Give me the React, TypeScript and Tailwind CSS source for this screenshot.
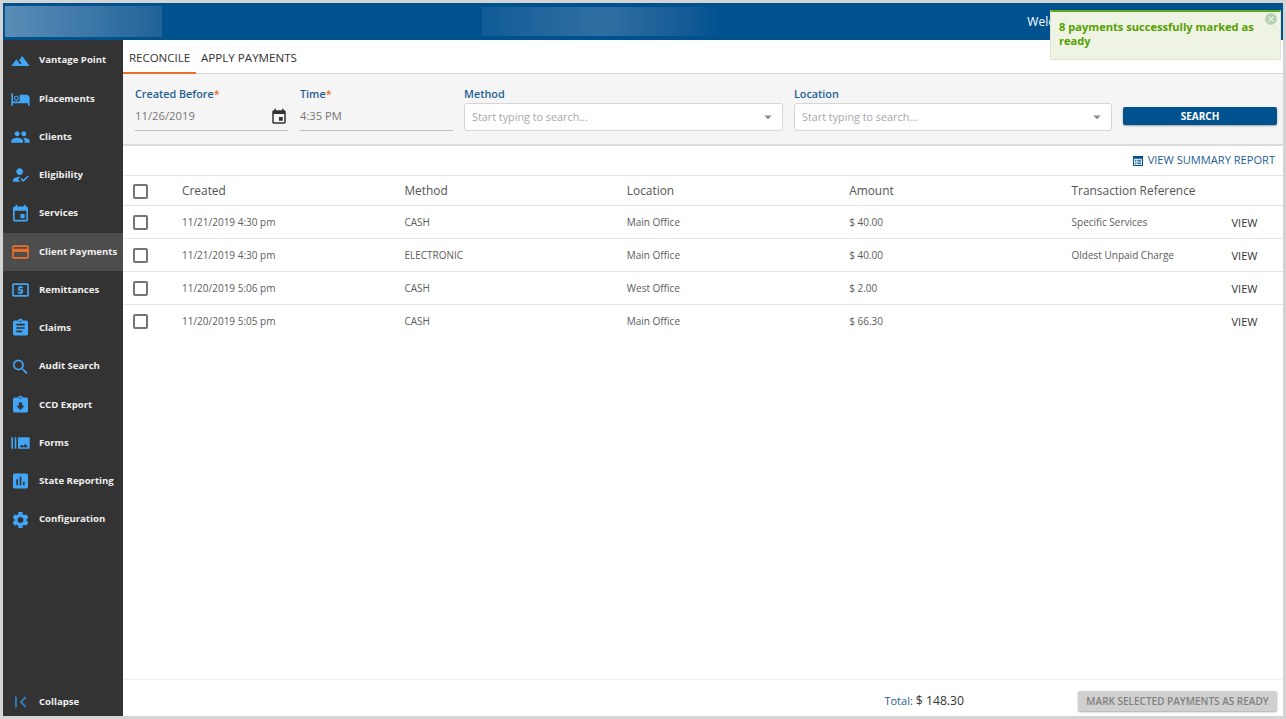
import React from "react";
import {
  MdLandscape, MdPeople, MdHowToReg, MdEvent, MdOutlineCreditCard, MdLocalAtm,
  MdAssignment, MdSearch, MdAssignmentReturned, MdBurstMode, MdAssessment, MdSettings, MdFirstPage,
  MdArrowDropDown, MdCancel,
} from "react-icons/md";

function BedIcon({ className }: { className?: string }) {
  return (
    <svg viewBox="0 0 24 24" className={className} width="1em" height="1em" fill="currentColor">
      <path
        fillRule="evenodd"
        d="M7 14c1.66 0 3-1.34 3-3S8.66 8 7 8s-3 1.34-3 3 1.34 3 3 3zm0-1.4c-.88 0-1.6-.72-1.6-1.6S6.12 9.4 7 9.4s1.6.72 1.6 1.6-.72 1.6-1.6 1.6zM19 7h-8v8H3V5H1v15h2v-3h18v3h2v-9c0-2.21-1.79-4-4-4z"
      />
    </svg>
  );
}

function SummaryIcon({ className }: { className?: string }) {
  return (
    <svg viewBox="0 0 12 12" className={className} width="1em" height="1em" fill="currentColor">
      <path fillRule="evenodd" d="M0 0h12v12H0zM1.2 3.4v7.4h9.6V3.4z" />
      <path d="M2.2 4.6h2v1.2h-2zM5.2 4.6h4.6v1.2H5.2zM2.2 6.6h2v1.2h-2zM5.2 6.6h4.6v1.2H5.2zM2.2 8.6h2v1.2h-2zM5.2 8.6h4.6v1.2H5.2z" />
    </svg>
  );
}

const nav = [
  { label: "Vantage Point", Icon: MdLandscape },
  { label: "Placements", Icon: BedIcon },
  { label: "Clients", Icon: MdPeople },
  { label: "Eligibility", Icon: MdHowToReg },
  { label: "Services", Icon: MdEvent },
  { label: "Client Payments", Icon: MdOutlineCreditCard, active: true },
  { label: "Remittances", Icon: MdLocalAtm },
  { label: "Claims", Icon: MdAssignment },
  { label: "Audit Search", Icon: MdSearch },
  { label: "CCD Export", Icon: MdAssignmentReturned },
  { label: "Forms", Icon: MdBurstMode },
  { label: "State Reporting", Icon: MdAssessment },
  { label: "Configuration", Icon: MdSettings },
];

const rows = [
  ["11/21/2019 4:30 pm", "CASH", "Main Office", "$ 40.00", "Specific Services"],
  ["11/21/2019 4:30 pm", "ELECTRONIC", "Main Office", "$ 40.00", "Oldest Unpaid Charge"],
  ["11/20/2019 5:06 pm", "CASH", "West Office", "$ 2.00", ""],
  ["11/20/2019 5:05 pm", "CASH", "Main Office", "$ 66.30", ""],
];

function Check() {
  return <span className="block w-[15px] h-[15px] rounded-[2px] border-2 border-[#757575] bg-white" />;
}

function Select({ label, width }: { label: string; width: string }) {
  return (
    <div className={`${width} flex flex-col`}>
      <label className="text-[10.8px] leading-[14px] text-[#1f6094] font-semibold h-[17px] pt-[1px]">{label}</label>
      <div className="h-[28px] bg-white border border-[#d6d6d6] rounded-[3px] flex items-center justify-between pl-[7px] pr-[5px]">
        <span className="text-[10.8px] text-[#a8a8a8]">Start typing to search...</span>
        <MdArrowDropDown className="text-[#8a8a8a] text-[18px]" />
      </div>
    </div>
  );
}

export default function App() {
  return (
    <div
      className="relative w-[1286px] h-[719px] bg-[#d4d4d4] p-[3px] overflow-hidden flex flex-col"
      style={{ fontFamily: '"Open Sans", sans-serif' }}
    >
      <header className="h-[37px] shrink-0 bg-[#00528f] flex items-center justify-between pl-[2px]">
        <div className="flex items-center">
          <div className="w-[157px] h-[31px] bg-gradient-to-r from-[#5a8eb8] to-[#1f6399]" />
          <div className="ml-[320px] w-[240px] h-[29px] bg-gradient-to-r from-[#0f5c96] via-[#2f6fa3] to-[#00528f]" />
        </div>
        <span className="text-[12px] text-white mr-[204px] pt-[1px]">Welcome</span>
      </header>

      <div className="flex flex-1 min-h-0">
        <aside className="w-[120px] shrink-0 bg-[#333333] flex flex-col pt-[1.5px]">
          <nav className="flex flex-col flex-1">
            {nav.map(({ label, Icon, active }) => (
              <div
                key={label}
                className={`h-[38.25px] flex items-center pl-[7px] ${active ? "bg-[#4d4d4d]" : ""}`}
              >
                <span className="w-[29px] flex justify-center shrink-0 -translate-x-[4.5px]">
                  <Icon className={`text-[20px] ${active ? "text-[#e8702a]" : "text-[#42a5f5]"}`} />
                </span>
                <span className="text-[9.6px] font-bold text-[#f0f0f0] whitespace-nowrap">{label}</span>
              </div>
            ))}
          </nav>
          <div className="h-[28px] flex items-center pl-[7px]">
            <span className="w-[29px] flex justify-center shrink-0 -translate-x-[4.5px]">
              <MdFirstPage className="text-[22px] text-[#2f80c0]" />
            </span>
            <span className="text-[9.6px] font-bold text-[#f0f0f0]">Collapse</span>
          </div>
        </aside>

        <main className="flex-1 bg-white flex flex-col min-w-0">
          <div className="h-[34px] shrink-0 border-b border-[#d8d8d8] flex">
            <div className="w-[73px] h-[34px] border-b-[2px] border-[#e8702a] flex justify-center pt-[10px] text-[11.5px] leading-[15px] text-[#333]">RECONCILE</div>
            <div className="ml-[5px] pt-[10px] text-[11.6px] leading-[15px] text-[#333]">APPLY PAYMENTS</div>
          </div>

          <div className="h-[72px] shrink-0 bg-[#f5f5f5] border-b-2 border-[#dcdcdc] flex items-start pt-[12px] pl-[12px] pr-[6px]">
            <div className="w-[153px]">
              <label className="block text-[10.8px] leading-[14px] h-[17px] pt-[1px] text-[#1f6094] font-semibold">Created Before<span className="text-[#e8702a]">*</span></label>
              <div className="h-[28px] border-b border-[#bdbdbd] flex items-center justify-between">
                <span className="text-[11.3px] text-[#757575]">11/26/2019</span>
                <MdEvent className="text-[18px] text-[#333]" />
              </div>
            </div>
            <div className="ml-[12px] w-[153px]">
              <label className="block text-[10.8px] leading-[14px] h-[17px] pt-[1px] text-[#1f6094] font-semibold">Time<span className="text-[#e8702a]">*</span></label>
              <div className="h-[28px] border-b border-[#bdbdbd] flex items-center">
                <span className="text-[11.2px] text-[#757575]">4:35 PM</span>
              </div>
            </div>
            <div className="ml-[11px]"><Select label="Method" width="w-[319px]" /></div>
            <div className="ml-[11px]"><Select label="Location" width="w-[318px]" /></div>
            <button className="ml-[11px] mt-[21px] w-[154px] h-[18px] bg-[#00528f] rounded-[2px] text-white text-[10px] font-bold shadow-[0_1px_2px_rgba(0,0,0,0.35)]">SEARCH</button>
          </div>

          <div className="h-[30px] shrink-0 border-b border-[#e4e4e4] flex items-center justify-end pr-[8px] gap-[5px] text-[#1f6094]">
            <SummaryIcon className="text-[10px] text-[#00528f]" />
            <span className="text-[11.1px]">VIEW SUMMARY REPORT</span>
          </div>

          <table className="w-full border-collapse table-fixed text-[#5c5c5c]">
            <colgroup>
              <col className="w-[59px]" />
              <col className="w-[222.4px]" />
              <col className="w-[222.4px]" />
              <col className="w-[222.4px]" />
              <col className="w-[222.4px]" />
              <col className="w-[160px]" />
              <col />
            </colgroup>
            <thead>
              <tr className="h-[29px] border-b border-[#e4e4e4] text-[11.9px] text-[#555] text-left">
                <th className="pl-[10px] pt-[2px] font-normal"><Check /></th>
                <th className="pt-[2px] font-normal">Created</th>
                <th className="pt-[2px] font-normal">Method</th>
                <th className="pt-[2px] font-normal">Location</th>
                <th className="pt-[2px] font-normal">Amount</th>
                <th className="pt-[2px] font-normal" colSpan={2}>Transaction Reference</th>
              </tr>
            </thead>
            <tbody>
              {rows.map((r, i) => (
                <tr key={i} className={`h-[33px] text-[10px] ${i < rows.length - 1 ? "border-b border-[#e4e4e4]" : ""}`}>
                  <td className="pl-[10px] pt-[2px]"><Check /></td>
                  {r.map((c, j) => <td key={j} className="whitespace-nowrap pt-[2px]">{c}</td>)}
                  <td className="text-[11px] text-[#333] pt-[3px]">VIEW</td>
                </tr>
              ))}
            </tbody>
          </table>

          <div className="mt-auto h-[37px] shrink-0 border-t border-[#f0f0f0] flex items-center justify-end pr-[6px] pt-[6px]">
            <span className="text-[11px] text-[#1f6094]">Total:</span>
            <span className="text-[12.2px] text-[#333] ml-[3px] mr-[114px]">$ 148.30</span>
            <button className="w-[199px] h-[20px] bg-[#d0d0d0] rounded-[2px] text-[10px] font-semibold text-[#808080] shadow-[0_1px_2px_rgba(0,0,0,0.35)]">MARK SELECTED PAYMENTS AS READY</button>
          </div>
        </main>
      </div>

      <div className="absolute left-[1050px] top-[10px] w-[231px] h-[50px] bg-[#eef3e4] border border-[#dfe6d0] border-t-2 border-t-[#5fa51f] rounded-b-[2px] pl-[8px] pt-[8px] pr-[20px] text-[11.1px] leading-[14px] font-bold text-[#56a000]">
        8 payments successfully marked as ready
        <MdCancel className="absolute right-[2px] top-[0px] text-[14px] text-[#b4ceb0]" />
      </div>
    </div>
  );
}
